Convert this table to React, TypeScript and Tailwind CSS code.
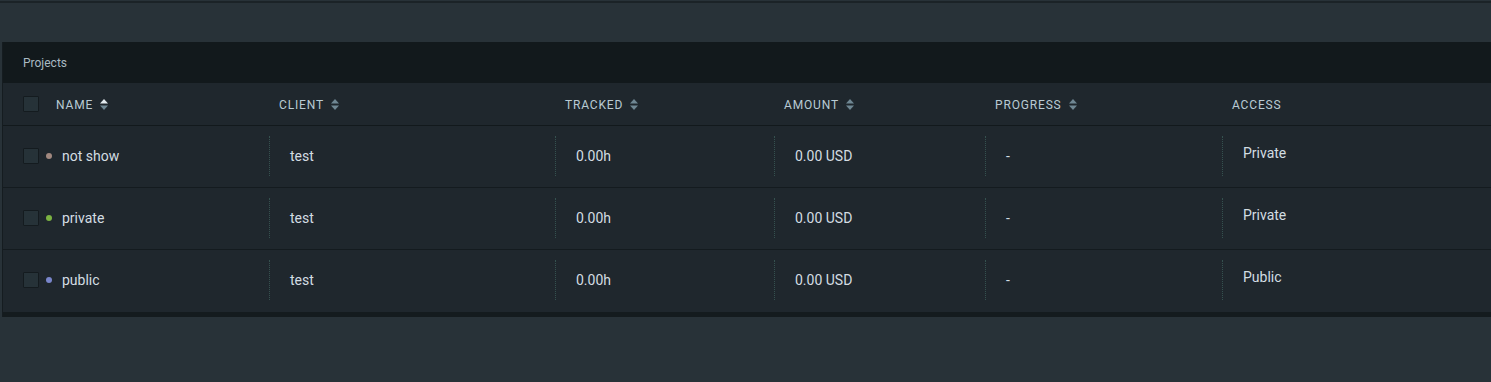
import { ReactNode } from 'react';

type Project = {
  name: string;
  color: string;
  client: string;
  tracked: string;
  amount: string;
  progress: string;
  access: string;
};

const projects: Project[] = [
  { name: 'not show', color: 'bg-[#a1887f]', client: 'test', tracked: '0.00h', amount: '0.00 USD', progress: '-', access: 'Private' },
  { name: 'private', color: 'bg-[#7cb342]', client: 'test', tracked: '0.00h', amount: '0.00 USD', progress: '-', access: 'Private' },
  { name: 'public', color: 'bg-[#7986cb]', client: 'test', tracked: '0.00h', amount: '0.00 USD', progress: '-', access: 'Public' },
];

// grid columns: name | client | tracked | amount | progress | access
const cols = 'grid grid-cols-[266px_286px_219px_211px_237px_1fr]';

function SortIcon({ active = false }: { active?: boolean }) {
  return (
    <svg width="8" height="11" viewBox="0 0 8 11" className="ml-[7px] shrink-0" aria-hidden="true">
      <path d="M4 0 L8 4.5 L0 4.5 Z" fill={active ? '#e3ebef' : '#6f8793'} />
      <path d="M0 6.5 L8 6.5 L4 11 Z" fill="#6f8793" />
    </svg>
  );
}

function Checkbox() {
  return <div className="w-4 h-4 shrink-0 bg-[#263238] border border-[#141b1f] rounded-[1px]" />;
}

function HeadLabel({ children }: { children: ReactNode }) {
  return <span className="text-[12px] tracking-[0.07em] text-[#b9cbd4] mt-[1px]">{children}</span>;
}

function HeadCell({ label, sort, active }: { label: string; sort?: boolean; active?: boolean }) {
  return (
    <div className="flex items-center pl-[10px]">
      <HeadLabel>{label}</HeadLabel>
      {sort && <SortIcon active={active} />}
    </div>
  );
}

function Cell({ children, raise }: { children: ReactNode; raise?: boolean }) {
  return (
    <div className="flex items-center">
      <div className="h-10 border-l border-dotted border-[#35514f]" />
      <div className={`pl-5 text-sm text-[#d3dde2] ${raise ? '-mt-[6px]' : ''}`}>{children}</div>
    </div>
  );
}

export default function App() {
  return (
    <div
      className="w-[1491px] h-[382px] bg-[#283238] overflow-hidden"
      style={{ fontFamily: 'Roboto, "Liberation Sans", sans-serif' }}
    >
      <div className="h-[3px] border-b-2 border-[#1b2327] border-t border-t-[#283238]" />
      <div className="h-[39px]" />

      <div className="ml-[2px] border-l border-[#151c20]">
        {/* title bar */}
        <div className="h-[41px] bg-[#12191c] flex items-center pl-5">
          <span className="text-xs text-[#a9bac2]">Projects</span>
        </div>

        {/* column headers */}
        <div className={`${cols} h-[43px] bg-[#1f272d] border-b border-[#12191c]`}>
          <div className="flex items-center pl-5">
            <Checkbox />
            <div className="ml-[17px] flex items-center">
              <HeadLabel>NAME</HeadLabel>
              <SortIcon active />
            </div>
          </div>
          <HeadCell label="CLIENT" sort />
          <HeadCell label="TRACKED" sort />
          <HeadCell label="AMOUNT" sort />
          <HeadCell label="PROGRESS" sort />
          <HeadCell label="ACCESS" />
        </div>

        {/* rows */}
        {projects.map((p, i) => (
          <div
            key={p.name}
            className={`${cols} h-[62px] pb-[2px] bg-[#1f272d] ${i < projects.length - 1 ? 'border-b border-[#141b1f]' : ''}`}
          >
            <div className="flex items-center pl-5">
              <Checkbox />
              <span className={`ml-[7px] w-[6px] h-[6px] rounded-full ${p.color}`} />
              <span className="ml-[10px] text-sm text-[#d3dde2]">{p.name}</span>
            </div>
            <Cell>{p.client}</Cell>
            <Cell>{p.tracked}</Cell>
            <Cell>{p.amount}</Cell>
            <Cell>{p.progress}</Cell>
            <Cell raise>{p.access}</Cell>
          </div>
        ))}
        <div className="h-[5px] bg-[#141b1e]" />
      </div>
    </div>
  );
}
